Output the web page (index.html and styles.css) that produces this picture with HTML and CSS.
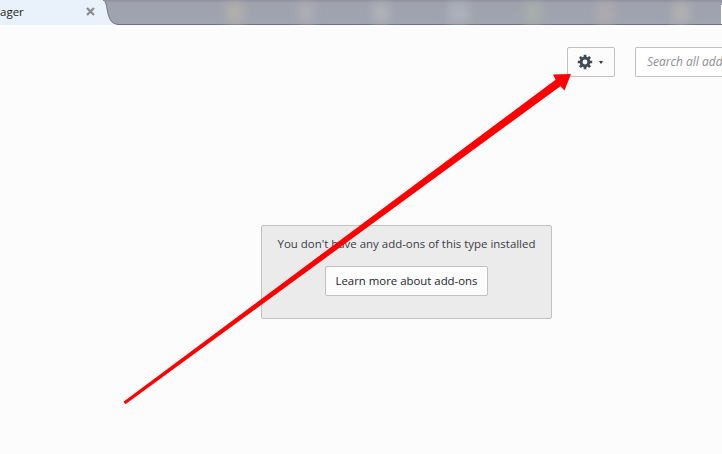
FILE: index.html
```html
<!DOCTYPE html>
<html lang="en">
<head>
<meta charset="utf-8">
<title>Add-ons Manager</title>
<link rel="stylesheet" href="styles.css">
</head>
<body>
<div class="tabstrip">
  <div class="tab">
    <span class="tab-title">ager</span>
    <svg class="tab-close" width="9" height="9" viewBox="0 0 9 9"><path d="M1 1l7 7M8 1l-7 7" stroke="#8a8d92" stroke-width="2.400" fill="none"/></svg>
  </div>
  <svg class="tab-curve" width="16" height="25" viewBox="0 0 16 25"><path d="M0 0H1C4 1 4.500 6 5.500 11C7 19 9 23.500 16 24.500V25H0Z" fill="#e9f1fb"/><path d="M1 0C4 1 4.500 6 5.500 11C7 19 9 23.500 16 24.500" fill="none" stroke="#6f7382" stroke-width="1"/></svg>
  <div class="strip-fill">
    <span class="blur b1"></span><span class="blur b2"></span><span class="blur b3"></span><span class="blur b4"></span><span class="blur b5"></span><span class="blur b6"></span><span class="blur b7"></span>
  </div>
</div>
<main class="content">
  <div class="toolbar">
    <button class="gear-btn" type="button" aria-label="Tools for all add-ons">
      <svg width="16" height="16" viewBox="0 0 16 16"><circle cx="8" cy="8" r="3.900" fill="none" stroke="#3f4a57" stroke-width="3"/><path d="M8 .8V3M8 13v2.200M.8 8H3M13 8h2.200M2.900 2.900l1.600 1.600M11.500 11.500l1.600 1.600M13.100 2.900l-1.600 1.600M4.500 11.500l-1.600 1.600" fill="none" stroke="#3f4a57" stroke-width="2.700"/></svg>
      <span class="caret"></span>
    </button>
    <div class="search">Search all add-ons</div>
  </div>
  <div class="notice">
    <p class="notice-text">You don't have any add-ons of this type installed</p>
    <button class="learn-btn" type="button">Learn more about add-ons</button>
  </div>
</main>
<svg class="arrow" width="722" height="454" viewBox="0 0 722 454"><path d="M123.500 401.700L125.400 404.300L560.400 86.200L564.500 90.500L571 74L553 74.500L555.600 79.800Z" fill="#f00"/></svg>
</body>
</html>
```

FILE: styles.css
```css
* { box-sizing: border-box; }
html, body { margin: 0; height: 100%; }
body {
  width: 722px;
  height: 454px;
  overflow: hidden;
  background: #fcfcfc;
  font-family: "Open Sans", "Liberation Sans", sans-serif;
  color: #3b3b45;
  position: relative;
}
.tabstrip { display: flex; height: 25px; }
.tab {
  width: 102px;
  height: 25px;
  background: #e9f1fb;
  display: flex;
  align-items: center;
  justify-content: space-between;
  padding: 0 7px 3px 0;
  flex: none;
}
.tab-title { font-size: 11.500px; color: #222; }
.tab-close { flex: none; margin-right: 0; }
.tab-curve { flex: none; background: linear-gradient(#8f8f9d 0, #9fa2ae 3px, #a0a4b0 100%); }
.strip-fill {
  flex: 1;
  height: 25px;
  background: linear-gradient(#8f8f9d 0, #a0a2ae 3px, #a0a5b1 24px, #6f7382 24px, #6f7382 25px);
  position: relative;
  overflow: hidden;
}
.strip-fill::after {
  content: "";
  position: absolute;
  right: 0;
  top: 5px;
  width: 1px;
  height: 19px;
  background: #fff;
}
.blur { position: absolute; top: 3px; height: 20px; filter: blur(4px); }
.b1 { left: 108px; width: 18px; background: #b0aeac; }
.b2 { left: 180px; width: 16px; background: #adadb4; }
.b3 { left: 255px; width: 16px; background: #b0b1b8; }
.b4 { left: 331px; width: 20px; background: #adb1bb; }
.b5 { left: 406px; width: 18px; background: #a7aeaa; }
.b6 { left: 479px; width: 16px; background: #aeabae; }
.b7 { left: 555px; width: 16px; background: #b1b0b2; }
.content { display: flex; flex-direction: column; align-items: center; padding-top: 22px; }
.toolbar { align-self: stretch; display: flex; padding-left: 567px; gap: 20px; }
.gear-btn {
  width: 48px;
  height: 30px;
  flex: none;
  border: 1px solid #c1c1c1;
  border-radius: 2px;
  background: #fcfcfc;
  padding: 0 0 0 9px;
  display: flex;
  align-items: center;
  gap: 6px;
}
.caret {
  width: 0;
  height: 0;
  border: 2.500px solid transparent;
  border-top: 3px solid #333;
  border-bottom: 0;
}
.search {
  width: 110px;
  height: 30px;
  flex: none;
  border: 1px solid #c1c1c1;
  border-right: 0;
  border-radius: 2px 0 0 2px;
  background: #fff;
  padding-left: 11px;
  font-size: 12px;
  line-height: 27px;
  font-style: italic;
  color: #8d8d93;
  white-space: nowrap;
  overflow: hidden;
}
.notice {
  margin: 148px 0 0 91px;
  width: 291px;
  height: 94px;
  background: #ebebeb;
  border: 1px solid #c1c1c1;
  border-radius: 2px;
  display: flex;
  flex-direction: column;
  align-items: center;
  padding-top: 9px;
}
.notice-text { margin: 0; font-size: 11.450px; line-height: 17px; white-space: nowrap; }
.learn-btn {
  margin-top: 14px;
  width: 163px;
  height: 30px;
  background: #fcfcfc;
  border: 1px solid #c1c1c1;
  border-radius: 2px;
  font: 11.400px "Open Sans", "Liberation Sans", sans-serif;
  color: #26262e;
  padding: 0 0 2px;
}
.arrow { position: absolute; left: 0; top: 0; pointer-events: none; }
```
